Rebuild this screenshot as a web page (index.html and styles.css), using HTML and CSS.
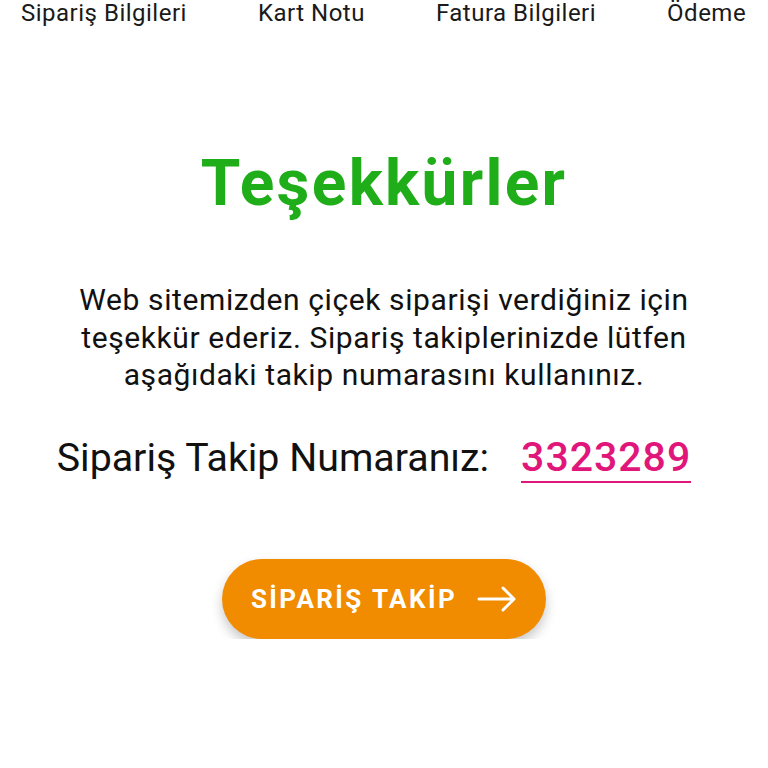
FILE: index.html
```html
<!DOCTYPE html>
<html lang="tr">
<head>
<meta charset="utf-8">
<link rel="stylesheet" href="styles.css">
</head>
<body>
<nav class="steps">
  <span class="step">Sipariş Bilgileri</span>
  <span class="step">Kart Notu</span>
  <span class="step">Fatura Bilgileri</span>
  <span class="step">Ödeme</span>
</nav>
<main class="content">
  <h1 class="title">Teşekkürler</h1>
  <p class="message">Web sitemizden çiçek siparişi verdiğiniz için teşekkür ederiz. Sipariş takiplerinizde lütfen aşağıdaki takip numarasını kullanınız.</p>
  <div class="tracking">
    <span class="tracking-label">Sipariş Takip Numaranız:</span>
    <span class="tracking-number">3323289</span>
  </div>
  <button class="track-btn">
    <span class="btn-label">SİPARİŞ TAKİP</span>
    <svg class="arrow" width="40" height="26" viewBox="0 0 40 26" fill="none" stroke="#fff" stroke-width="3" stroke-linecap="round" stroke-linejoin="round"><path d="M2 13H37M26 2L37 13L26 24"/></svg>
  </button>
</main>
</body>
</html>
```
FILE: styles.css
```css
html, body {
  margin: 0;
  padding: 0;
  background: #fff;
}
body {
  font-family: Roboto, "Noto Sans", sans-serif;
  color: #111;
}
.steps {
  display: flex;
  gap: 71px;
  padding: 0 0 0 21px;
  white-space: nowrap;
  font-size: 24px;
  letter-spacing: 0.5px;
  line-height: 26px;
  color: #1a1a1a;
}
.content {
  display: flex;
  flex-direction: column;
  align-items: center;
}
.title {
  margin: 124px 0 0;
  font-size: 64px;
  line-height: 68px;
  font-weight: 700;
  color: #1fae1a;
  letter-spacing: 2.3px;
}
.message {
  margin: 63px 0 0;
  width: 660px;
  text-align: center;
  font-size: 30px;
  letter-spacing: 0.6px;
  line-height: 37.5px;
  color: #111;
}
.tracking {
  display: flex;
  align-items: baseline;
  gap: 32px;
  margin: 40px 20px 0 0;
  font-size: 39.3px;
  line-height: 48px;
}
.tracking-number {
  color: #e0167b;
  font-size: 41px;
  font-weight: 500;
  letter-spacing: 1px;
  border-bottom: 2px solid #e0167b;
  line-height: 47px;
}
.track-btn {
  margin-top: 76px;
  display: flex;
  align-items: center;
  gap: 20px;
  height: 80px;
  padding: 0 29px 0 29px;
  border: none;
  border-radius: 40px;
  background: #f18b00;
  color: #fff;
  font-family: Roboto, sans-serif;
  font-size: 26px;
  font-weight: 700;
  letter-spacing: 2.4px;
  box-shadow: 0 6px 12px rgba(0,0,0,0.22);
}
.arrow {
  display: block;
}
```
